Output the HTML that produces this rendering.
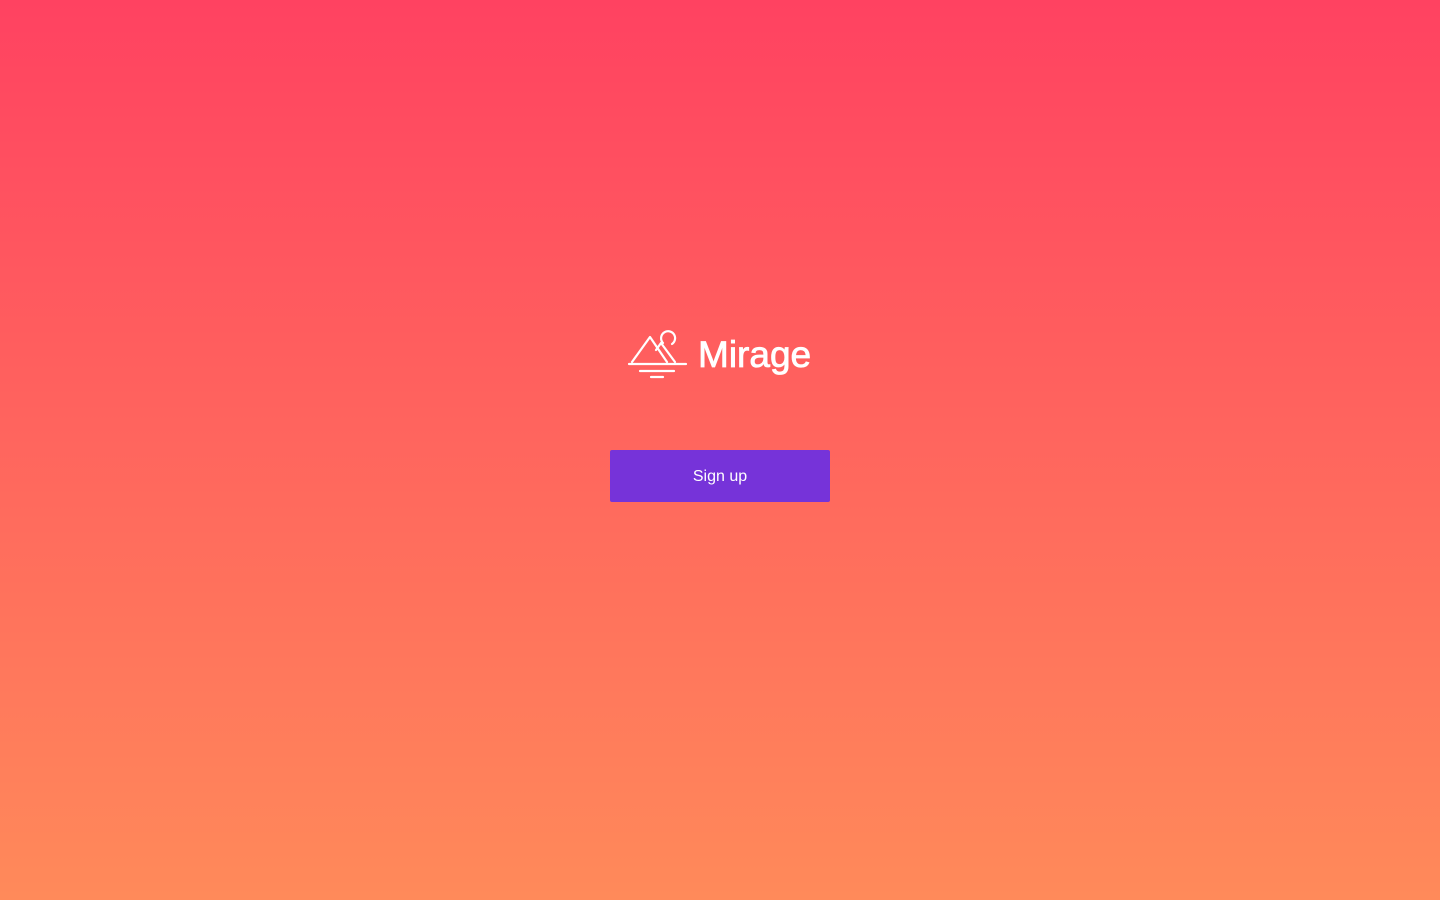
<!DOCTYPE html>
<html><head><style>
html,body{margin:0;width:1440px;height:900px;overflow:hidden}
body{background:linear-gradient(180deg,#ff4261 0%,#ff8a5a 100%);font-family:"Liberation Sans",sans-serif;position:relative}
.logo{position:absolute;left:626px;top:326px;width:64px;height:56px}
.name{position:absolute;left:698px;top:332px;color:#fff;font-size:37px;font-weight:normal;-webkit-text-stroke:0.8px #fff;line-height:46px}
.btn{position:absolute;left:610px;top:450px;width:220px;height:52px;background:#7633d9;border-radius:2px;color:#fff;font-size:16px;text-align:center;line-height:53px}
</style></head><body>
<svg class="logo" viewBox="626 326 64 56" fill="none" stroke="#fff" stroke-width="2.2" stroke-linecap="round" stroke-linejoin="round">
<path d="M663 343 A7 7 0 1 1 672 344"/>
<path d="M632 362 L650 337 L667 362"/>
<path d="M656 350 L661 343 L675 362"/>
<path d="M629 364 H686"/>
<path d="M640 371 H674"/>
<path d="M651 377 H663"/>
</svg>
<div class="name">Mirage</div>
<div class="btn">Sign up</div>
</body></html>
